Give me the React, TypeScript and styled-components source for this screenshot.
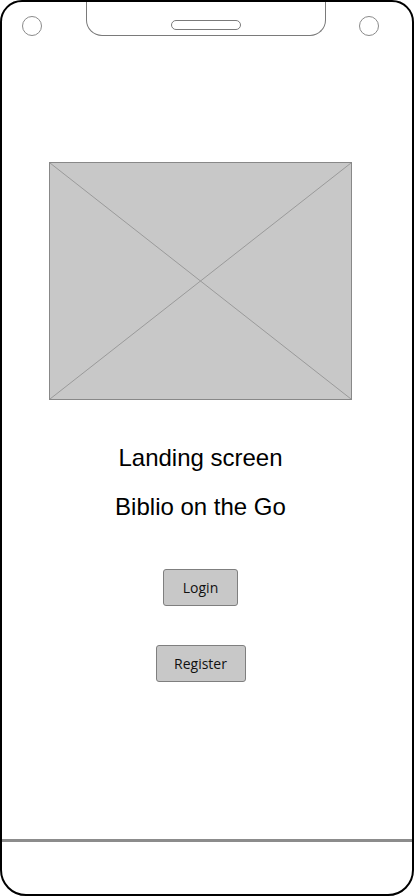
import React from "react";
import styled, { createGlobalStyle } from "styled-components";

const Global = createGlobalStyle`
  html, body { margin: 0; padding: 0; background: #ffffff; }
  * { box-sizing: border-box; }
`;

const Phone = styled.div`
  width: 414px;
  height: 896px;
  border: 2px solid #000;
  border-radius: 22px 22px 26px 26px;
  background: #fff;
  display: flex;
  flex-direction: column;
  overflow: hidden;
`;

const TopBar = styled.div`
  display: flex;
  align-items: flex-start;
  height: 34px;
  flex-shrink: 0;
`;

const Camera = styled.div<{ $ml: number }>`
  width: 20px;
  height: 20px;
  border: 1px solid #8a8a8a;
  border-radius: 50%;
  margin-top: 14px;
  margin-left: ${(p) => p.$ml}px;
  flex-shrink: 0;
`;

const Notch = styled.div`
  width: 240px;
  height: 34px;
  margin-left: 44px;
  border: 1px solid #7a7a7a;
  border-top: none;
  border-radius: 0 0 16px 16px;
  display: flex;
  justify-content: center;
  padding-top: 18px;
  flex-shrink: 0;
`;

const Speaker = styled.div`
  width: 70px;
  height: 10px;
  border: 1px solid #7a7a7a;
  border-radius: 5px;
`;

const Content = styled.div`
  width: 303px;
  margin-left: 47px;
  margin-top: 126px;
  display: flex;
  flex-direction: column;
  align-items: center;
`;

const Placeholder = styled.div`
  width: 303px;
  height: 238px;
  background: #c8c8c8;
  border: 1px solid #888;
  position: relative;
  svg {
    position: absolute;
    inset: 0;
    width: 100%;
    height: 100%;
  }
`;

const Title = styled.div<{ $mt: number }>`
  font-family: "Liberation Sans", Arial, sans-serif;
  font-size: 24px;
  line-height: 28px;
  color: #000;
  margin-top: ${(p) => p.$mt}px;
  white-space: nowrap;
`;

const Button = styled.button<{ $w: number; $mt: number }>`
  width: ${(p) => p.$w}px;
  height: 37px;
  margin-top: ${(p) => p.$mt}px;
  background: #c8c8c8;
  border: 1px solid #7f7f7f;
  border-radius: 3px;
  font-family: "Open Sans", sans-serif;
  font-size: 14px;
  color: #111;
  padding: 0;
  cursor: pointer;
`;

const Spacer = styled.div`
  flex: 1;
`;

const Footer = styled.div`
  height: 55px;
  flex-shrink: 0;
  border-top: 3px solid #8c8c8c;
`;

export default function App() {
  return (
    <>
      <Global />
      <Phone>
        <TopBar>
          <Camera $ml={20} />
          <Notch>
            <Speaker />
          </Notch>
          <Camera $ml={33} />
        </TopBar>
        <Content>
          <Placeholder>
            <svg viewBox="0 0 301 236" preserveAspectRatio="none">
              <line x1="0" y1="0" x2="301" y2="236" stroke="#9a9a9a" strokeWidth="1" />
              <line x1="301" y1="0" x2="0" y2="236" stroke="#9a9a9a" strokeWidth="1" />
            </svg>
          </Placeholder>
          <Title $mt={44}>Landing screen</Title>
          <Title $mt={21}>Biblio on the Go</Title>
          <Button $w={75} $mt={48}>Login</Button>
          <Button $w={90} $mt={39}>Register</Button>
        </Content>
        <Spacer />
        <Footer />
      </Phone>
    </>
  );
}
